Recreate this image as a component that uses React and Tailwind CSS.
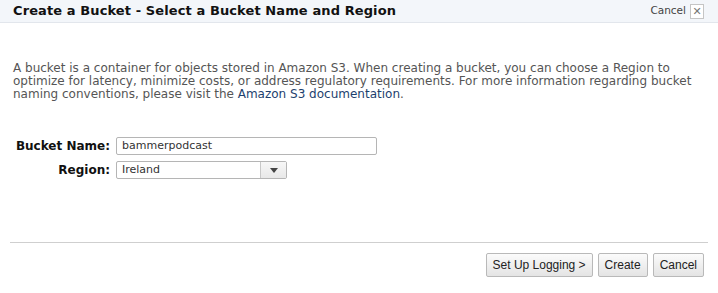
import React from "react";

const verdana = "font-['DejaVu_Sans',Verdana,sans-serif]";
const arial = "font-['Liberation_Sans',Arial,sans-serif]";

const Btn = ({ children }) => (
  <button className={`h-[24px] px-[6px] rounded-[2px] border border-[#b9b9b9] bg-gradient-to-b from-[#fbfbfb] to-[#e4e4e4] text-[12px] text-[#222] ${arial}`}>
    {children}
  </button>
);

export default function App() {
  return (
    <div className={`w-[718px] h-[293px] bg-white ${verdana}`}>
      {/* header */}
      <div className="h-[23px] flex items-center justify-between pl-[13px] pr-[14px] bg-[#f3f6fa] border-b border-[#e2e6ec]">
        <h1 className="text-[13px] font-bold text-[#111] tracking-[0.1px]">
          Create a Bucket - Select a Bucket Name and Region
        </h1>
        <div className="flex items-center gap-[4px]">
          <span className="text-[10.5px] text-[#444]">Cancel</span>
          <span className="w-[14px] h-[15px] border border-[#c5c5c5] bg-white flex items-center justify-center text-[11px] leading-none text-[#777]">
            ✕
          </span>
        </div>
      </div>

      {/* description */}
      <p className="mt-[39px] mx-[13px] text-[12px] leading-[13px] text-[#555] whitespace-nowrap">
        A bucket is a container for objects stored in Amazon S3. When creating a bucket, you can choose a Region to
        <br />
        optimize for latency, minimize costs, or address regulatory requirements. For more information regarding bucket
        <br />
        naming conventions, please visit the <a className="text-[#1d3f6e]">Amazon S3 documentation</a>.
      </p>

      {/* form */}
      <div className="mt-[36px] grid grid-cols-[110px_1fr] gap-x-[6px] gap-y-[6px] items-center">
        <label className="text-right text-[12px] font-bold text-[#111]">Bucket Name:</label>
        <div className="w-[261px] h-[18px] border border-[#b5b5b5] rounded-[2px] px-[5px] flex items-center text-[11px] text-[#333]">
          bammerpodcast
        </div>
        <label className="text-right text-[12px] font-bold text-[#111]">Region:</label>
        <div className="w-[171px] h-[18px] border border-[#b5b5b5] rounded-[2px] flex items-center text-[11px] text-[#333]">
          <span className="flex-1 px-[5px]">Ireland</span>
          <span className="w-[26px] h-full border-l border-[#c8c8c8] bg-gradient-to-b from-[#f7f7f7] to-[#e8e8e8] flex items-center justify-center">
            <svg width="8" height="5" viewBox="0 0 8 5">
              <path d="M0 0 H8 L4 5 Z" fill="#444" />
            </svg>
          </span>
        </div>
      </div>

      {/* footer */}
      <div className="mt-[63px] mx-[10px] border-t border-[#cfcfcf]" />
      <div className="mt-[10px] mr-[14px] flex justify-end gap-[5px]">
        <Btn>Set Up Logging &gt;</Btn>
        <Btn>Create</Btn>
        <Btn>Cancel</Btn>
      </div>
    </div>
  );
}
